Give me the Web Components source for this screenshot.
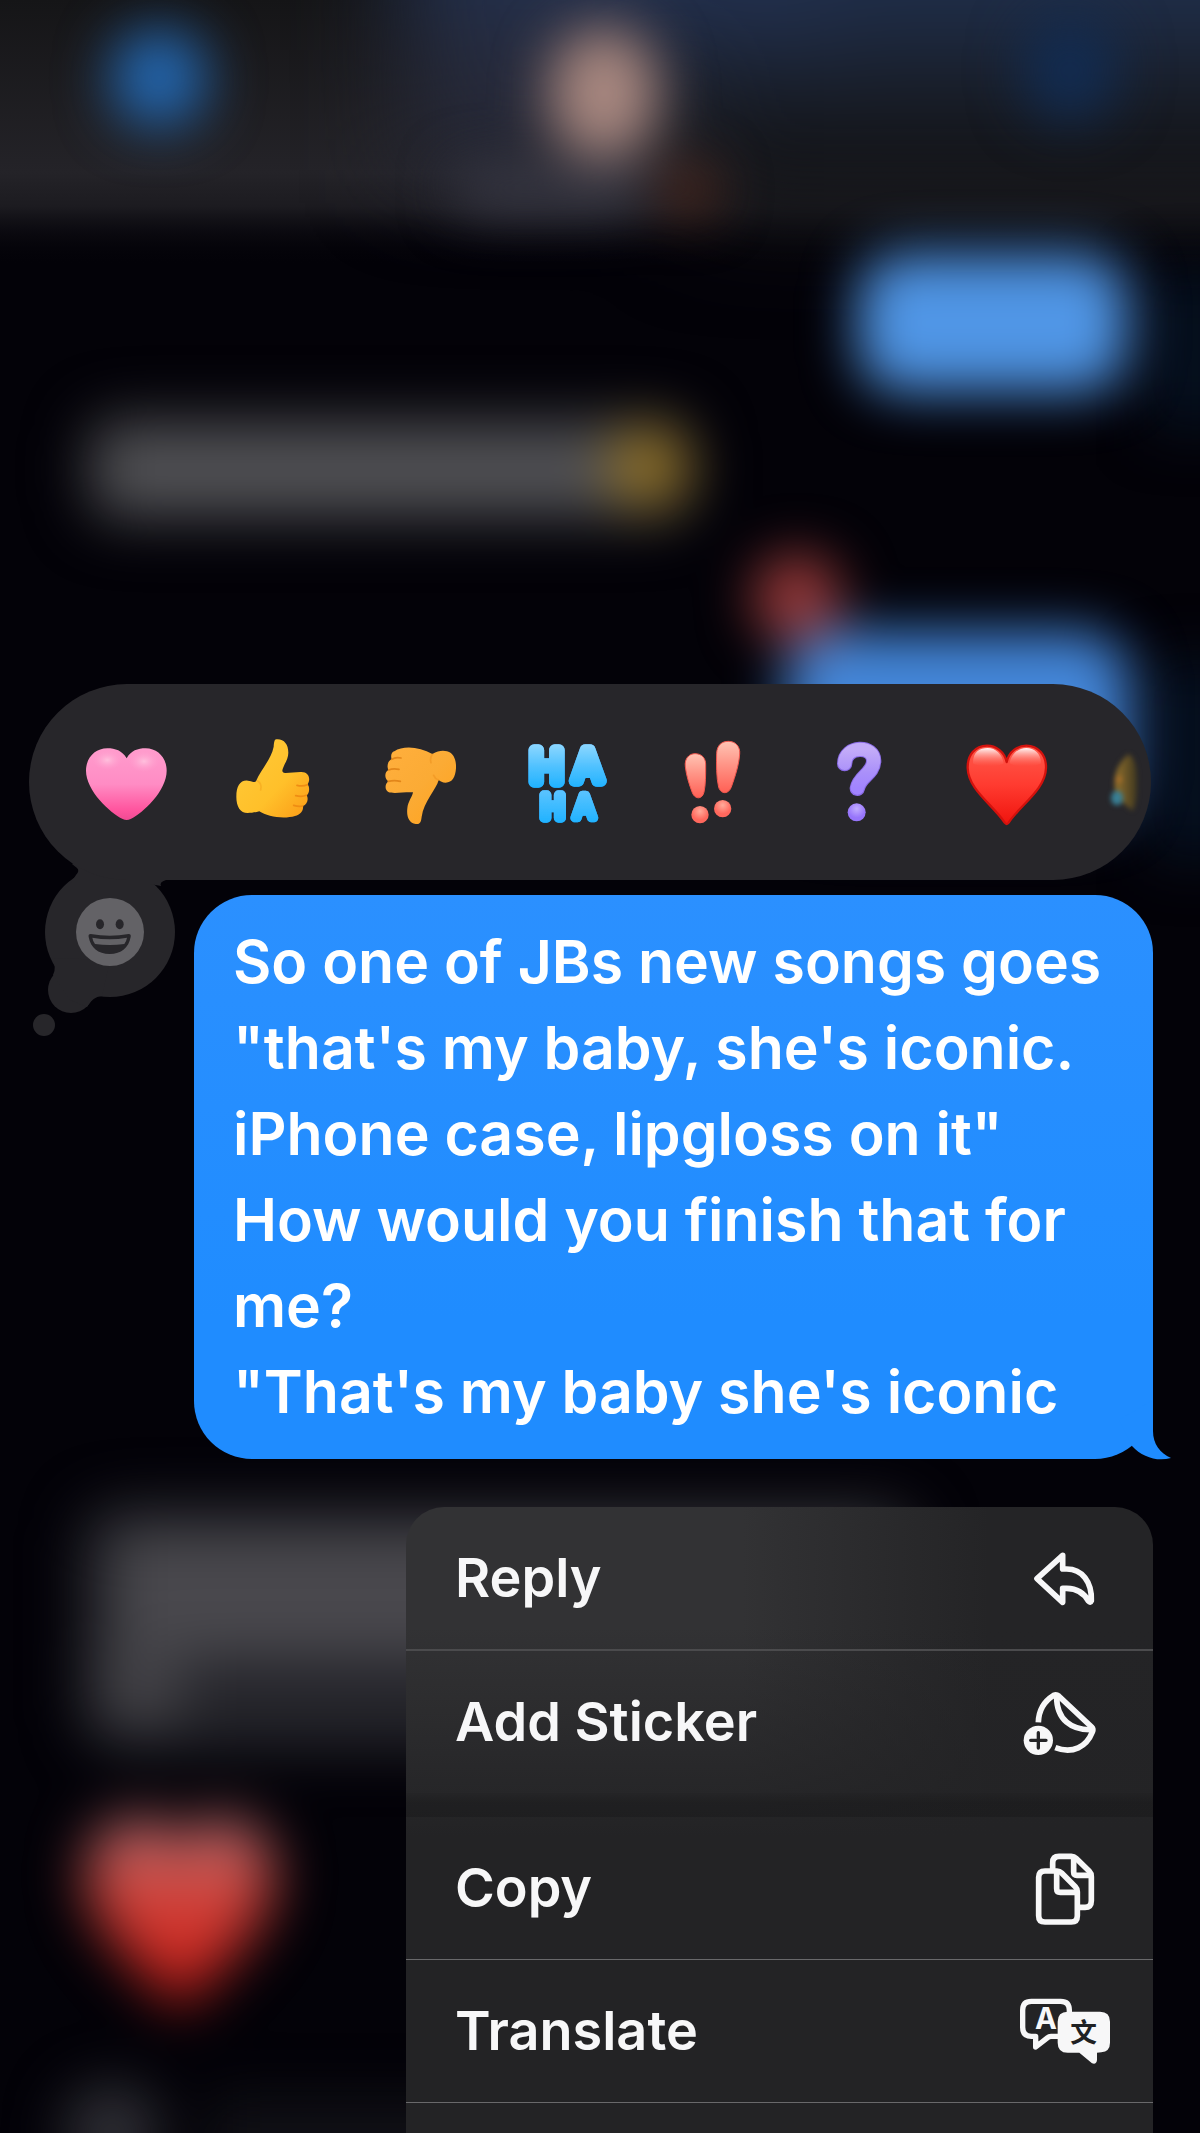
<!DOCTYPE html>
<html lang="en">
<head>
<meta charset="utf-8">
<meta name="viewport" content="width=device-width, initial-scale=1">
<title>Message actions</title>
<style>
  html, body { margin: 0; height: 100%; background: #030208; overflow: hidden; }
  body { font-family: Inter, "Liberation Sans", sans-serif; font-weight: 600; color: #fff; }
</style>
</head>
<body>
<message-screen>
  <reaction-bar slot="reactions">
    <reaction-button kind="pink-heart" label="Love"></reaction-button>
    <reaction-button kind="thumb-up" label="Like"></reaction-button>
    <reaction-button kind="thumb-down" label="Dislike"></reaction-button>
    <reaction-button kind="haha" label="Laugh"></reaction-button>
    <reaction-button kind="exclaim" label="Emphasize"></reaction-button>
    <reaction-button kind="question" label="Question"></reaction-button>
    <reaction-button kind="red-heart" label="Red heart"></reaction-button>
    <reaction-button kind="faded" label="More reactions"></reaction-button>
  </reaction-bar>
  <message-bubble slot="message">So one of JBs new songs goes<br>"that's my baby, she's iconic.<br>iPhone case, lipgloss on it"<br>How would you finish that for me?<br>"That's my baby she's iconic</message-bubble>
  <context-menu slot="menu">
    <menu-item icon="reply" class="soft">Reply</menu-item>
    <menu-item icon="sticker" class="last">Add Sticker</menu-item>
    <menu-gap></menu-gap>
    <menu-item icon="copy">Copy</menu-item>
    <menu-item icon="translate">Translate</menu-item>
  </context-menu>
</message-screen>

<script>
class BaseElement extends HTMLElement {
  connectedCallback() {
    if (this.shadowRoot) return;
    this.attachShadow({ mode: "open" }).innerHTML = this.render();
  }
}

const REACTIONS = {
  "pink-heart": ["234 222 288 288", `
    <defs><linearGradient id="g" x1="0" y1="0" x2="0" y2="1"><stop offset="0" stop-color="#ff9ccd"/><stop offset=".5" stop-color="#ff8cc4"/><stop offset=".85" stop-color="#ff569f"/><stop offset="1" stop-color="#f04a93"/></linearGradient>
    <radialGradient id="h"><stop offset="0" stop-color="#ffc0dd"/><stop offset="1" stop-color="#ffa0cf" stop-opacity="0"/></radialGradient></defs>
    <path fill="url(#g)" d="M380 295C366 272 346 265 322 265C285 265 258 294 258 332C258 392 330 458 368 477Q380 483 392 477C430 458 500 392 500 332C500 294 473 265 437 265C413 265 393 272 380 295Z"/>
    <ellipse cx="322" cy="300" rx="44" ry="30" fill="url(#h)"/><ellipse cx="432" cy="304" rx="46" ry="32" fill="url(#h)"/>`],
  "thumb-up": ["674 222 288 288", `
    <defs><linearGradient id="g" x1="0" y1="0" x2="1" y2="1"><stop offset="0" stop-color="#ffcb3a"/><stop offset=".6" stop-color="#ffc02a"/><stop offset="1" stop-color="#fb9a16"/></linearGradient></defs>
    <path fill="url(#g)" d="M828 238C850 236 864 252 864 278C864 298 850 314 846 331Q846 340 856 339L900 336C926 334 932 358 922 373C930 384 926 402 919 406C926 418 920 434 908 438C910 452 900 464 884 468C850 478 800 470 777 454C765 457 755 459 742 459C720 459 708 440 708 410C708 378 720 360 742 362C755 362 762 370 767 364C780 330 812 300 820 260C821 248 822 238 828 238Z"/>
    <path fill="none" stroke="#ef8d13" stroke-width="5" stroke-linecap="round" d="M921 374Q908 380 890 376M918 406Q904 412 886 407M907 438Q896 441 880 436"/>
    <path fill="none" stroke="#f5a51c" stroke-width="5" stroke-linecap="round" opacity=".6" d="M772 363Q786 372 781 390"/>`],
  "thumb-down": ["34 102 288 288", `
    <defs><linearGradient id="g" x1="0" y1="0" x2="1" y2="1"><stop offset="0" stop-color="#ffaf3d"/><stop offset=".5" stop-color="#fbab35"/><stop offset="1" stop-color="#ffa21c"/></linearGradient></defs>
    <path fill="url(#g)" d="M104 154C130 136 180 140 218 162C235 152 250 150 262 154C285 160 290 185 289 205C287 232 278 248 258 248C248 248 242 244 237 240C230 268 192 305 186 350C184 366 182 373 168 372C148 370 140 350 143 325C145 305 158 290 160 277C130 276 100 282 86 276C74 268 76 252 86 244C74 236 74 216 86 210C80 196 86 182 96 178C92 166 96 156 104 154Z"/>
    <path fill="none" stroke="#e2861a" stroke-width="5" stroke-linecap="round" d="M96 178Q108 170 124 174M87 210Q100 204 118 208M86 244Q104 240 122 244"/>
    <path fill="none" stroke="#ee9220" stroke-width="5" stroke-linecap="round" opacity=".6" d="M218 163Q210 174 214 188M236 240Q226 236 222 226"/>`],
  "haha": ["474 102 288 288", `
    <defs><linearGradient id="g" gradientUnits="userSpaceOnUse" x1="0" y1="130" x2="0" y2="265"><stop offset="0" stop-color="#8fd8ff"/><stop offset=".5" stop-color="#52c2ff"/><stop offset="1" stop-color="#1fb2ff"/></linearGradient>
    <linearGradient id="k" gradientUnits="userSpaceOnUse" x1="0" y1="270" x2="0" y2="370"><stop offset="0" stop-color="#5cc4ff"/><stop offset="1" stop-color="#1fb2ff"/></linearGradient>
    <filter id="e"><feDropShadow dx="0" dy="0" stdDeviation="2" flood-color="#1190f0"/></filter></defs>
    <text font-family="Inter, sans-serif" font-weight="400" stroke-linejoin="round" stroke-linecap="round" text-anchor="middle" filter="url(#e)"><tspan font-size="130" stroke-width="35" fill="url(#g)" stroke="url(#g)" x="560" y="246">H</tspan><tspan font-size="126" stroke-width="34" fill="url(#g)" stroke="url(#g)" x="683" y="244">A</tspan><tspan font-size="92" stroke-width="28" fill="url(#k)" stroke="url(#k)" x="578" y="354">H</tspan><tspan font-size="92" stroke-width="25" fill="url(#k)" stroke="url(#k)" x="673" y="354">A</tspan></text>`],
  "exclaim": ["914 102 288 288", `
    <defs><linearGradient id="g" x1="0" y1="0" x2="0" y2="1"><stop offset="0" stop-color="#ffc4b4"/><stop offset=".45" stop-color="#ff9587"/><stop offset="1" stop-color="#ff6055"/></linearGradient>
    <radialGradient id="r" cy=".3"><stop offset="0" stop-color="#ffab9b"/><stop offset="1" stop-color="#ff685d"/></radialGradient></defs>
    <path fill="url(#g)" stroke="#f4584e" stroke-width="3" d="M1004 161C1024 161 1037 174 1036 196C1036 226 1036 254 1031 276C1026 299 1004 299 996 278C986 252 978 226 975 200C972 176 986 161 1004 161Z"/>
    <path fill="url(#g)" stroke="#f4584e" stroke-width="3" d="M1104 124C1126 124 1140 140 1138 162C1136 194 1124 230 1114 258C1106 284 1082 284 1075 262C1068 232 1068 192 1069 160C1070 136 1084 124 1104 124Z"/>
    <circle cx="1019" cy="344" r="26" fill="url(#r)"/><circle cx="1087" cy="326" r="26" fill="url(#r)"/>`],
  "question": ["154 162 288 288", `
    <defs><linearGradient id="g" x1="0" y1="0" x2="0" y2="1"><stop offset="0" stop-color="#c3acf8"/><stop offset=".6" stop-color="#aa90fa"/><stop offset="1" stop-color="#a184ff"/></linearGradient>
    <radialGradient id="r" cy=".3"><stop offset="0" stop-color="#c2adff"/><stop offset="1" stop-color="#9775fb"/></radialGradient></defs>
    <g fill="none" stroke-linecap="round"><path stroke="#8a6be6" stroke-width="46" d="M255 251C256 196 344 194 342 244C340 282 300 288 293 325"/>
    <path stroke="url(#g)" stroke-width="40" d="M255 250C256 196 344 194 342 244C340 282 300 288 293 324"/></g>
    <circle cx="291" cy="397" r="27" fill="url(#r)"/>`],
  "red-heart": ["595 162 288 288", `
    <defs><linearGradient id="g" x1="0" y1="0" x2="0" y2="1"><stop offset="0" stop-color="#ff5a4c"/><stop offset=".5" stop-color="#ff3b30"/><stop offset="1" stop-color="#f0140e"/></linearGradient>
    <linearGradient id="h" x1="0" y1="0" x2="0" y2="1"><stop offset="0" stop-color="#fff" stop-opacity=".95"/><stop offset="1" stop-color="#ff7a6d" stop-opacity="0"/></linearGradient></defs>
    <path fill="url(#g)" stroke="#d3120d" stroke-width="7" stroke-linejoin="round" d="M741 246C734 214 708 197 682 197C646 197 623 226 624 264C626 330 700 374 735 428Q741 436 747 428C782 374 857 330 859 264C860 226 836 197 800 197C774 197 748 214 741 246Z"/>
    <path fill="url(#h)" d="M640 250C640 214 660 204 684 204C708 204 728 222 732 250C718 262 654 262 640 250ZM750 250C754 222 776 204 800 204C824 204 844 220 844 250C828 262 764 262 750 250Z"/>`],
  "faded": ["1035 162 288 288", `
    <defs><filter id="b" x="-50%" y="-50%" width="200%" height="200%" color-interpolation-filters="sRGB"><feGaussianBlur stdDeviation="8"/></filter>
    <linearGradient id="m"><stop offset="0" stop-color="#93712c"/><stop offset="1" stop-color="#3f3820"/></linearGradient></defs>
    <g filter="url(#b)"><path fill="url(#m)" d="M1108 222Q1134 236 1134 300Q1136 370 1120 392Q1090 370 1070 340Q1054 270 1108 222Z"/>
    <ellipse cx="1074" cy="354" rx="18" ry="22" fill="#397f94"/><circle cx="1080" cy="298" r="10" fill="#a86f2a"/></g>`]
};

customElements.define("reaction-button", class extends BaseElement {
  render() {
    const [box, art] = REACTIONS[this.getAttribute("kind")];
    return `<style>
      :host { display: flex; justify-content: center; flex: 0 0 calc((100% - 72px) / 7); }
      button { all: unset; display: block; cursor: pointer; }
      svg { display: block; width: 96px; height: 96px; }
    </style><button type="button" aria-label="${this.getAttribute("label")}"><svg viewBox="${box}" aria-hidden="true">${art}</svg></button>`;
  }
});

customElements.define("reaction-bar", class extends BaseElement {
  render() {
    return `<style>
      :host { display: block; position: relative; --fill: #27262a; }
      .pill { display: flex; align-items: center; height: 196px; padding-left: 24px; box-sizing: border-box;
        border-radius: 98px; background: var(--fill); overflow: hidden; position: relative; z-index: 1; }
      .tail { position: absolute; left: 0; top: 170px; width: 180px; height: 190px; }
      .tail svg { display: block; width: 100%; height: 100%; }
      .more { all: unset; position: absolute; z-index: 2; left: 47px; top: 214px; width: 68px; height: 68px; cursor: pointer; }
      .more svg { display: block; width: 100%; height: 100%; }
    </style>
    <div class="tail"><svg viewBox="29 854 180 190" aria-hidden="true"><g fill="#27262a">
      <circle cx="110" cy="932" r="65"/><circle cx="71" cy="990" r="23"/><circle cx="44" cy="1025" r="11"/>
      <path d="M84 860L72 864L77 868Q80 871 76 875L70 884H150L161 886Q159 882 166 880L170 860Z"/>
      <path d="M52 958Q57 968 53 975L70 1000L87 1007Q92 997 102 996L110 960Z"/></g></svg></div>
    <div class="pill"><slot></slot></div>
    <button class="more" type="button" aria-label="Choose emoji"><svg viewBox="230 713 204 204" aria-hidden="true">
      <circle cx="332" cy="815" r="102" fill="#636266"/>
      <ellipse cx="302" cy="792" rx="12" ry="15" fill="#27262a"/><ellipse cx="361" cy="792" rx="12" ry="15" fill="#27262a"/>
      <path fill="#27262a" d="M274 821Q332 832 388 821Q396 821 394 830C388 862 366 881 331 881C296 881 274 862 268 830Q266 821 274 821Z"/>
      <path fill="#636266" d="M279 832Q331 842 383 832Q381 844 375 851Q331 857 287 851Q281 844 279 832Z"/></svg></button>`;
  }
});

customElements.define("message-bubble", class extends BaseElement {
  render() {
    return `<style>
      :host { display: block; position: relative; box-sizing: border-box; padding: 24px 38px 24px 39px;
        border-radius: 58px; background: linear-gradient(#2b90ff, #1f8cff 75%); font-size: 59px; line-height: 86px; }
      svg { position: absolute; right: -18px; bottom: -1px; width: 52px; height: 60px; }
      p { margin: 0; }
    </style><p><slot></slot></p>
    <svg viewBox="1119 1400 52 60" aria-hidden="true"><path fill="#1f8cff" d="M1153 1400V1431C1153 1444 1160 1453 1171 1458C1157 1462 1142 1457 1132 1446L1119 1420Z"/></svg>`;
  }
});

const ICONS = {
  reply: ["180 129 270 270", `<path fill="none" stroke="currentColor" stroke-width="17" stroke-linejoin="round" d="M308 196L231 266L308 337V295H320C355 296 374 312 385 333Q391 340 394 332C396 275 366 237 320 237H308Z"/>`],
  sticker: ["180 561 270 270", `
    <g fill="none" stroke="currentColor" stroke-width="17" stroke-linejoin="round">
      <path d="M235 697C236 662 252 634 281 616Q289 612 296 618L395 711Q401 717 397 726C380 770 338 793 286 773"/>
      <path d="M290 618C289 690 335 722 398 719"/></g>
    <circle cx="235" cy="751" r="44" fill="currentColor"/>
    <path stroke="#242426" stroke-width="10" stroke-linecap="round" d="M212 751H258M235 728V774"/>`],
  copy: ["180 97 270 270", `
    <g fill="none" stroke="currentColor" stroke-width="17" stroke-linejoin="round">
      <path d="M278 178V156Q278 137 297 137H334Q342 137 348 143L388 182Q394 188 394 198V270Q394 290 375 290H356"/>
      <path d="M341 138V184Q341 194 351 194H392"/>
      <path d="M255 181H291Q299 181 305 187L346 228Q352 234 352 243V315Q352 334 334 334H255Q236 334 236 315V200Q236 181 255 181Z"/>
      <path d="M290 182V234Q290 245 301 245H351"/></g>`],
  translate: ["180 528 270 270", `
    <path fill="none" stroke="currentColor" stroke-width="16" stroke-linejoin="round" d="M328 610V600Q328 574 302 574H214Q188 574 188 600V652Q188 679 214 679H227V711L263 683Q267 679 273 679H300"/>
    <text x="258" y="658" font-family="Inter, sans-serif" font-weight="700" font-size="88" text-anchor="middle" fill="currentColor">A</text>
    <path fill="currentColor" d="M323 605H420Q450 605 450 635V698Q450 724 424 727L411 728V750Q409 765 396 760L358 728H323Q293 728 293 698V635Q293 605 323 605Z"/>
    <text x="371" y="696" font-family="'Noto Sans CJK SC', sans-serif" font-weight="700" font-size="80" text-anchor="middle" fill="#202123">文</text>`]
};

customElements.define("menu-item", class extends BaseElement {
  render() {
    const [box, art] = ICONS[this.getAttribute("icon")];
    return `<style>
      :host { display: block; border-bottom: 1px solid #69696b; }
      :host(.soft) { border-bottom: 2px solid #4b4b4d; }
      :host(.last) { border-bottom: 0; }
      button { all: unset; display: flex; align-items: center; justify-content: space-between; cursor: pointer;
        width: 100%; height: 142px; box-sizing: border-box; padding: 0 43px 0 49px; font-size: 54px; line-height: 68px; color: #f7f7f8; }
      svg { display: block; width: 90px; height: 90px; }
    </style><button type="button" role="menuitem"><span><slot></slot></span><svg viewBox="${box}" aria-hidden="true">${art}</svg></button>`;
  }
});

customElements.define("menu-gap", class extends BaseElement {
  render() {
    return `<style>:host { display: block; height: 24px; background: linear-gradient(rgba(0,0,0,.04), rgba(0,0,0,.16) 40%); }</style>`;
  }
});

customElements.define("context-menu", class extends BaseElement {
  render() {
    return `<style>
      :host { display: block; box-sizing: border-box; border-radius: 38px 38px 0 0; overflow: hidden;
        background: linear-gradient(rgba(35,35,37,0) 120px, #232325 330px), linear-gradient(90deg, #323234 45%, #242426 78%); }
    </style><div role="menu"><slot></slot></div>`;
  }
});

/* The conversation behind the menu, thrown out of focus. */
customElements.define("blurred-chat", class extends BaseElement {
  render() {
    return `<style>
      :host { display: block; position: absolute; inset: 0; overflow: hidden; background: #030208; }
      svg { display: block; width: 100%; height: 100%; }
    </style>
    <svg viewBox="0 0 1200 2133" preserveAspectRatio="xMidYMin slice" aria-hidden="true">
      <defs>
        <linearGradient id="head" x1="0" y1="0" x2="0" y2="1"><stop offset="0" stop-color="#151517"/><stop offset=".65" stop-color="#242328"/><stop offset=".78" stop-color="#1c1b20"/><stop offset="1" stop-color="#030208" stop-opacity="0"/></linearGradient>
        <linearGradient id="headR" x1="0" y1="0" x2="0" y2="1"><stop offset="0" stop-color="#202f4c"/><stop offset=".4" stop-color="#1f2f4c"/><stop offset=".6" stop-color="#1a202d"/><stop offset=".8" stop-color="#131417"/><stop offset="1" stop-color="#111115"/></linearGradient>
        <linearGradient id="heart" x1="0" y1="0" x2="0" y2="1"><stop offset="0" stop-color="#b87478"/><stop offset=".35" stop-color="#cc4740"/><stop offset=".65" stop-color="#d42e26"/><stop offset="1" stop-color="#a01410"/></linearGradient>
        <filter id="s" x="-80%" y="-80%" width="260%" height="260%" color-interpolation-filters="sRGB"><feGaussianBlur stdDeviation="27"/></filter>
        <filter id="m" x="-60%" y="-60%" width="220%" height="220%" color-interpolation-filters="sRGB"><feGaussianBlur stdDeviation="28"/></filter>
        <filter id="l" x="-60%" y="-60%" width="220%" height="220%" color-interpolation-filters="sRGB"><feGaussianBlur stdDeviation="50"/></filter>
      </defs>
      <rect width="1200" height="265" fill="url(#head)"/>
      <g filter="url(#l)"><rect x="690" y="-150" width="700" height="370" fill="url(#headR)"/><rect x="400" y="-120" width="420" height="170" fill="#22304e"/><rect x="410" y="20" width="230" height="150" fill="#272a3a"/></g>
      <g filter="url(#s)">
        <rect x="112" y="30" width="94" height="96" rx="40" fill="#2366ae"/>
        <rect x="550" y="28" width="108" height="130" rx="54" fill="#a98880"/>
        <rect x="1025" y="20" width="90" height="100" rx="38" fill="#122c52"/>
        <rect x="455" y="166" width="190" height="46" rx="16" fill="#383844"/>
        <circle cx="689" cy="190" r="26" fill="#54281a"/>
      </g>
      <g filter="url(#m)">
        <rect x="1150" y="270" width="90" height="160" fill="#06101f"/>
        <rect x="1150" y="660" width="90" height="200" fill="#061020"/>
      </g>
      <g filter="url(#s)">
        <rect x="858" y="254" width="270" height="138" rx="44" fill="#5096e6"/>
        <rect x="80" y="410" width="618" height="118" rx="40" fill="#26262a"/>
        <rect x="100" y="432" width="530" height="76" rx="20" fill="#515155"/>
        <circle cx="648" cy="467" r="42" fill="#8c6e28"/>
        <rect x="786" y="632" width="344" height="190" rx="48" fill="#4487da"/>
        <circle cx="797" cy="598" r="44" fill="#9a3a3a"/>
      </g>
      <g filter="url(#m)">
        <rect x="80" y="1504" width="840" height="246" rx="40" fill="#25252b"/>
        <rect x="112" y="1532" width="765" height="126" rx="20" fill="#49484d"/>
        <rect x="98" y="1640" width="84" height="86" rx="20" fill="#424146"/>
        <path fill="url(#heart)" d="M180 1842C160 1806 94 1808 86 1868C82 1926 142 1968 180 2014C218 1968 278 1926 274 1868C266 1808 200 1806 180 1842Z"/>
        <circle cx="112" cy="2132" r="48" fill="#303036"/>
        <rect x="210" y="2100" width="400" height="90" fill="#111116"/>
      </g>
    </svg>`;
  }
});

customElements.define("message-screen", class extends BaseElement {
  render() {
    return `<style>
      :host { display: block; position: relative; min-height: 100vh; overflow: hidden; }
      main { position: relative; display: flex; flex-direction: column; box-sizing: border-box; height: 100vh; padding: 684px 47px 0 29px; }
      ::slotted([slot="reactions"]) { margin: 0 2px 15px 0; z-index: 1; }
      ::slotted([slot="message"]) { margin-left: 165px; flex: none; }
      ::slotted([slot="menu"]) { width: 747px; max-width: 100%; flex: 1 0 auto; align-self: flex-end; margin-top: 48px; }
    </style>
    <blurred-chat></blurred-chat>
    <main><slot name="reactions"></slot><slot name="message"></slot><slot name="menu"></slot></main>`;
  }
});
</script>
</body>
</html>
